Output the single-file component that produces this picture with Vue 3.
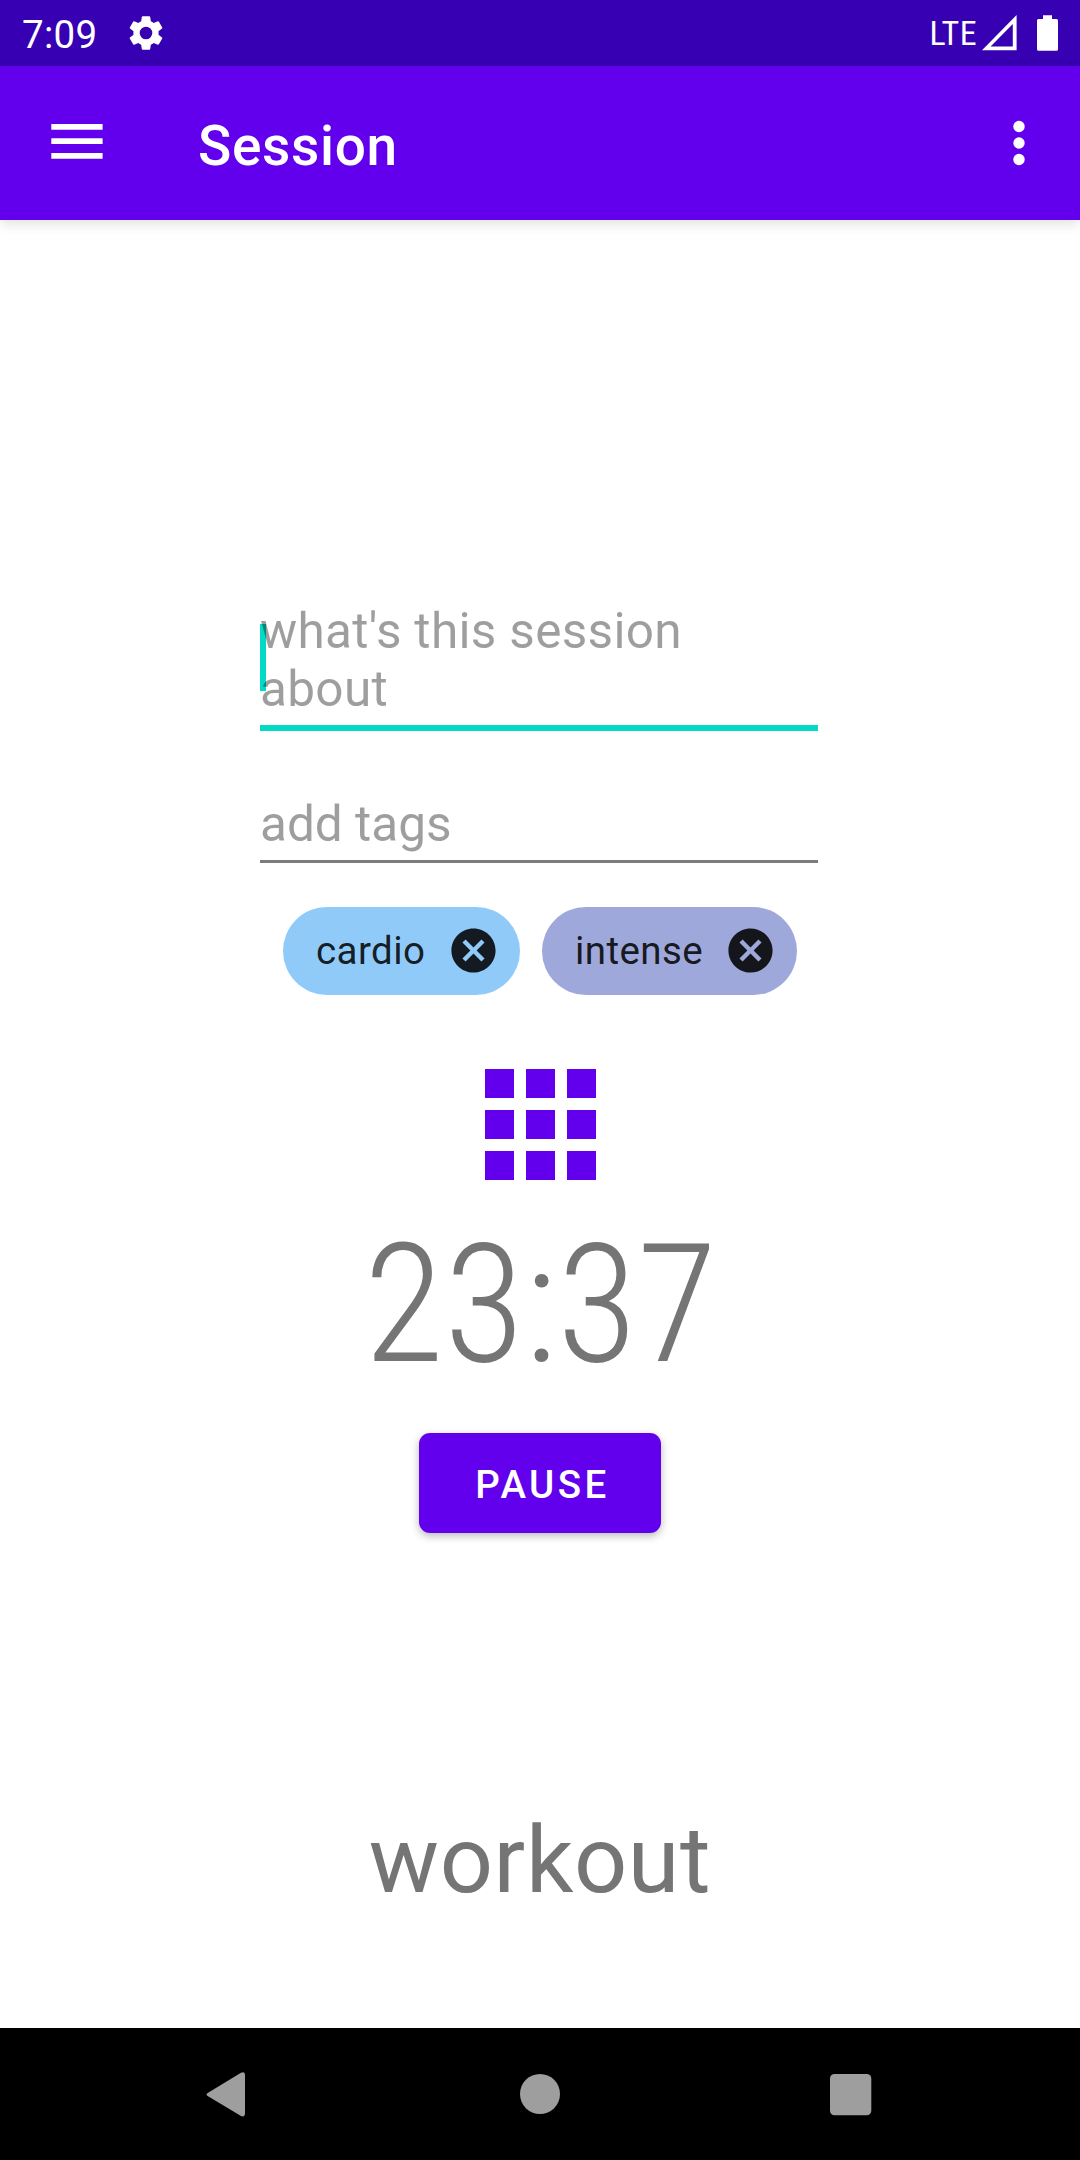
<script setup>
const tags = [
  { label: 'cardio', tone: 'blue' },
  { label: 'intense', tone: 'indigo' },
]
</script>

<template>
  <div class="screen">
    <header class="status">
      <span class="clock">7:09</span>
      <svg class="gear" viewBox="0 0 24 24">
        <path d="M19.14 12.94c.04-.3.06-.61.06-.94 0-.32-.02-.64-.07-.94l2.03-1.58a.49.49 0 0 0 .12-.61l-1.92-3.32a.49.49 0 0 0-.59-.22l-2.39.96c-.5-.38-1.03-.7-1.62-.94l-.36-2.54a.48.48 0 0 0-.48-.41h-3.84c-.24 0-.43.17-.47.41l-.36 2.54c-.59.24-1.13.57-1.62.94l-2.39-.96a.48.48 0 0 0-.59.22L2.74 8.87a.47.47 0 0 0 .12.61l2.03 1.58c-.05.3-.09.63-.09.94s.02.64.07.94l-2.03 1.58a.49.49 0 0 0-.12.61l1.92 3.32c.12.22.37.29.59.22l2.39-.96c.5.38 1.03.7 1.62.94l.36 2.54c.05.24.24.41.48.41h3.84c.24 0 .44-.17.47-.41l.36-2.54c.59-.24 1.13-.56 1.62-.94l2.39.96c.22.08.47 0 .59-.22l1.92-3.32a.47.47 0 0 0-.12-.61zM12 15.6a3.6 3.6 0 1 1 0-7.2 3.6 3.6 0 0 1 0 7.2z" />
      </svg>
      <span class="network">LTE</span>
      <svg class="signal" viewBox="0 0 35 36">
        <path fill-rule="evenodd" d="M0 35.3 34.6 0V35.3ZM8.6 31.4H30.8V9Z" />
      </svg>
      <svg class="battery" viewBox="0 0 21 36">
        <path d="M6 0.3h9V4h4.500a1.500 1.500 0 0 1 1.500 1.500v28.700a1.500 1.500 0 0 1-1.500 1.500h-18a1.500 1.500 0 0 1-1.500-1.500V5.500A1.500 1.500 0 0 1 1.500 4H6z" />
      </svg>
    </header>

    <nav class="appbar">
      <svg class="menu" viewBox="0 0 52 36">
        <path d="M.3 0h51.300v5.800H.3zM.3 14.300h51.300v5.700H.3zM.3 29h51.300v5.700H.3z" />
      </svg>
      <h1 class="title">Session</h1>
      <svg class="more" viewBox="0 0 12 46">
        <circle cx="6" cy="6.500" r="5.700" />
        <circle cx="6" cy="23" r="5.700" />
        <circle cx="6" cy="39.500" r="5.700" />
      </svg>
    </nav>

    <main class="content">
      <div class="field focused">
        <i class="caret"></i>
        <span class="hint">what's this session about</span>
      </div>
      <div class="field">
        <span class="hint">add tags</span>
      </div>

      <div class="chips">
        <div v-for="tag in tags" :key="tag.label" class="chip" :class="tag.tone">
          <span>{{ tag.label }}</span>
          <svg class="close" viewBox="0 0 24 24">
            <path d="M12 2C6.470 2 2 6.470 2 12s4.470 10 10 10 10-4.470 10-10S17.530 2 12 2zm5 13.590L15.590 17 12 13.410 8.410 17 7 15.590 10.590 12 7 8.410 8.410 7 12 10.590 15.590 7 17 8.410 13.410 12 17 15.590z" />
          </svg>
        </div>
      </div>

      <div class="grid">
        <i v-for="n in 9" :key="n"></i>
      </div>

      <div class="timer">23:37</div>
      <button class="pause">PAUSE</button>
      <div class="kind">workout</div>
    </main>

    <footer class="navbar">
      <svg viewBox="0 0 48 48">
        <path d="M8.500 22.500 41 2.800Q45 1 45 5.300V43Q45 47.500 41 46L8.500 26.600Q4.500 24.500 8.500 22.500Z" />
      </svg>
      <svg viewBox="0 0 48 48"><circle cx="24" cy="24" r="20" /></svg>
      <svg viewBox="0 0 48 48"><rect x="4" y="4" width="41.300" height="41.300" rx="4.500" /></svg>
    </footer>
  </div>
</template>

<style>
body {
  margin: 0;
}
</style>

<style scoped>
.screen {
  width: 1080px;
  height: 2160px;
  display: flex;
  flex-direction: column;
  overflow: hidden;
  background: #fff;
  font-family: Roboto, 'Noto Sans', sans-serif;
  color: #757575;
}
svg {
  display: block;
  flex: none;
}
.status {
  flex: none;
  height: 66px;
  box-sizing: border-box;
  padding: 0 22px;
  display: flex;
  align-items: flex-start;
  background: #3700b3;
  color: #fff;
  fill: #fff;
}
.clock {
  width: 103px;
  margin-top: 12px;
  font-size: 38.500px;
  line-height: 45px;
  letter-spacing: 0.3px;
}
.gear {
  width: 42px;
  height: 42px;
  margin-top: 12px;
}
.network {
  margin: 13px 5px 0 auto;
  font-size: 34px;
  line-height: 40px;
  font-stretch: 75%;
  letter-spacing: 0.4px;
}
.signal {
  width: 35px;
  height: 36px;
  margin: 15px 20px 0 0;
}
.battery {
  width: 21px;
  height: 36px;
  margin-top: 15px;
}
.appbar {
  position: relative;
  flex: none;
  height: 154px;
  box-sizing: border-box;
  padding: 0 55px 0 51px;
  display: flex;
  align-items: flex-start;
  background: #6200ee;
  fill: #fff;
  box-shadow: 0 4px 12px rgba(0, 0, 0, 0.12);
}
.menu {
  width: 52px;
  height: 36px;
  margin-top: 58px;
}
.title {
  margin: 48px 0 0 95px;
  font-size: 55px;
  line-height: 64px;
  font-weight: 500;
  letter-spacing: 0.65px;
  color: #fff;
}
.more {
  width: 12px;
  height: 46px;
  margin: 54px 0 0 auto;
}
.content {
  flex: 1;
  display: flex;
  flex-direction: column;
  align-items: center;
  padding-top: 382px;
}
.field {
  position: relative;
  width: 558px;
  margin: 64px 2px 0 0;
  padding-bottom: 7px;
  border-bottom: 3px solid #7c7c7c;
}
.field.focused {
  margin-top: 0;
  border-bottom: 6px solid #03dac5;
}
.hint {
  position: relative;
  display: block;
  padding-right: 22px;
  font-size: 49.500px;
  line-height: 58px;
  color: rgba(0, 0, 0, 0.38);
}
.focused .hint {
  letter-spacing: 0.32px;
}
.caret {
  position: absolute;
  left: 0;
  top: 22px;
  width: 6px;
  height: 67px;
  background: #03dac5;
}
.chips {
  display: flex;
  gap: 22px;
  margin-top: 44px;
}
.chip {
  height: 88px;
  box-sizing: border-box;
  padding: 0 20.500px 1px 33px;
  border-radius: 44px;
  display: flex;
  align-items: center;
  justify-content: space-between;
  font-size: 38.500px;
  letter-spacing: 0.011em;
  color: rgba(0, 0, 0, 0.87);
  fill: rgba(0, 0, 0, 0.87);
}
.blue {
  width: 237px;
  background: #90caf9;
}
.indigo {
  width: 255px;
  background: #9fa8da;
}
.close {
  width: 53px;
  height: 53px;
}
.grid {
  display: grid;
  grid-template-columns: repeat(3, 29px);
  grid-auto-rows: 29px;
  gap: 12px;
  margin: 74px 0 0 1px;
}
.grid i {
  background: #6200ee;
}
.timer {
  margin: 28px 0 0 1px;
  font-size: 165px;
  line-height: 193px;
  font-weight: 300;
  font-stretch: 75%;
  letter-spacing: -0.2px;
}
.pause {
  width: 242px;
  height: 100px;
  margin-top: 32px;
  padding: 2px 0 0 5px;
  border: 0;
  border-radius: 11px;
  background: #6200ee;
  color: #fff;
  font: 500 38.500px/45px Roboto, sans-serif;
  letter-spacing: 0.0893em;
  box-shadow: 0 3px 8px rgba(0, 0, 0, 0.28);
}
.kind {
  margin-top: 272px;
  font-size: 93.500px;
  line-height: 110px;
  letter-spacing: 0.6px;
}
.navbar {
  flex: none;
  height: 132px;
  box-sizing: border-box;
  padding: 0 206px 0 200px;
  display: flex;
  align-items: center;
  justify-content: space-between;
  background: #000;
  fill: #9e9e9e;
}
.navbar svg {
  width: 48px;
  height: 48px;
}
.navbar svg:nth-child(2) {
  margin-left: 6px;
}
</style>
